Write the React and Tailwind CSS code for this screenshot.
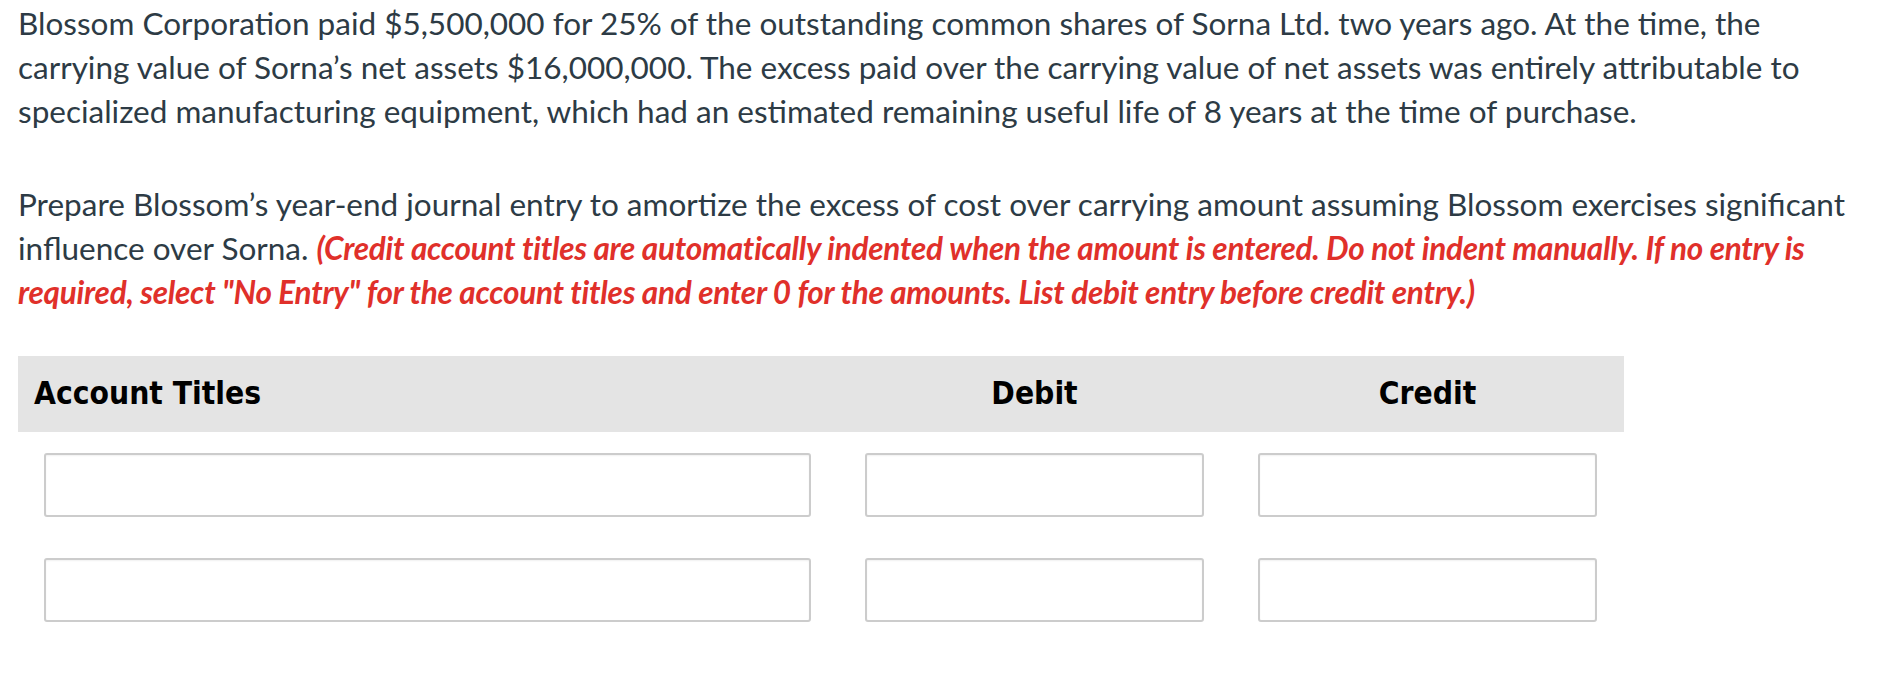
import React from 'react';

const rows = [0, 1];

const Field = ({ className = '' }) => (
  <div
    className={`h-[64px] rounded-[3px] border-2 border-[#cccccc] bg-white shadow-[inset_0_1px_2px_rgba(0,0,0,0.06)] ${className}`}
  />
);

const App = () => {
  return (
    <div className="w-[1886px] min-h-[684px] bg-white font-['Lato','Open_Sans',sans-serif] text-[#2d3b45]">
      <div className="px-[18px] pt-[1px] text-[31.5px] leading-[44px]">
        <p>
          Blossom Corporation paid $5,500,000 for 25% of the outstanding common shares of Sorna Ltd. two years ago. At the
          time, the carrying value of Sorna’s net assets $16,000,000. The excess paid over the carrying value of net assets
          was entirely attributable to specialized manufacturing equipment, which had an estimated remaining useful life of
          8 years at the time of purchase.
        </p>
        <p className="mt-[49px]">
          Prepare Blossom’s year-end journal entry to amortize the excess of cost over carrying amount assuming Blossom
          exercises significant influence over Sorna.{' '}
          <span className="font-bold italic tracking-[-0.25px] text-[#e0302a]">
            (Credit account titles are automatically indented when the amount is entered. Do not indent manually. If no
            entry is required, select "No Entry" for the account titles and enter 0 for the amounts. List debit entry
            before credit entry.)
          </span>
        </p>
      </div>

      {/* journal table */}
      <div className="ml-[18px] mt-[42px] w-[1606px]">
        <div className="grid h-[76px] grid-cols-[820px_393px_393px] items-center bg-[#e4e4e4] font-['DejaVu_Sans_Condensed','DejaVu_Sans',sans-serif] text-[31.5px] font-bold text-black font-stretch-condensed">
          <div className="pl-[16px]">Account Titles</div>
          <div className="text-center">Debit</div>
          <div className="text-center">Credit</div>
        </div>

        <div className="flex flex-col gap-[41px] pt-[21px]">
          {rows.map((r) => (
            <div key={r} className="grid grid-cols-[820px_393px_393px]">
              <div className="pl-[26px] pr-[27px]">
                <Field />
              </div>
              <div className="px-[27px]">
                <Field />
              </div>
              <div className="px-[27px]">
                <Field />
              </div>
            </div>
          ))}
        </div>
      </div>
    </div>
  );
};

export default App;
